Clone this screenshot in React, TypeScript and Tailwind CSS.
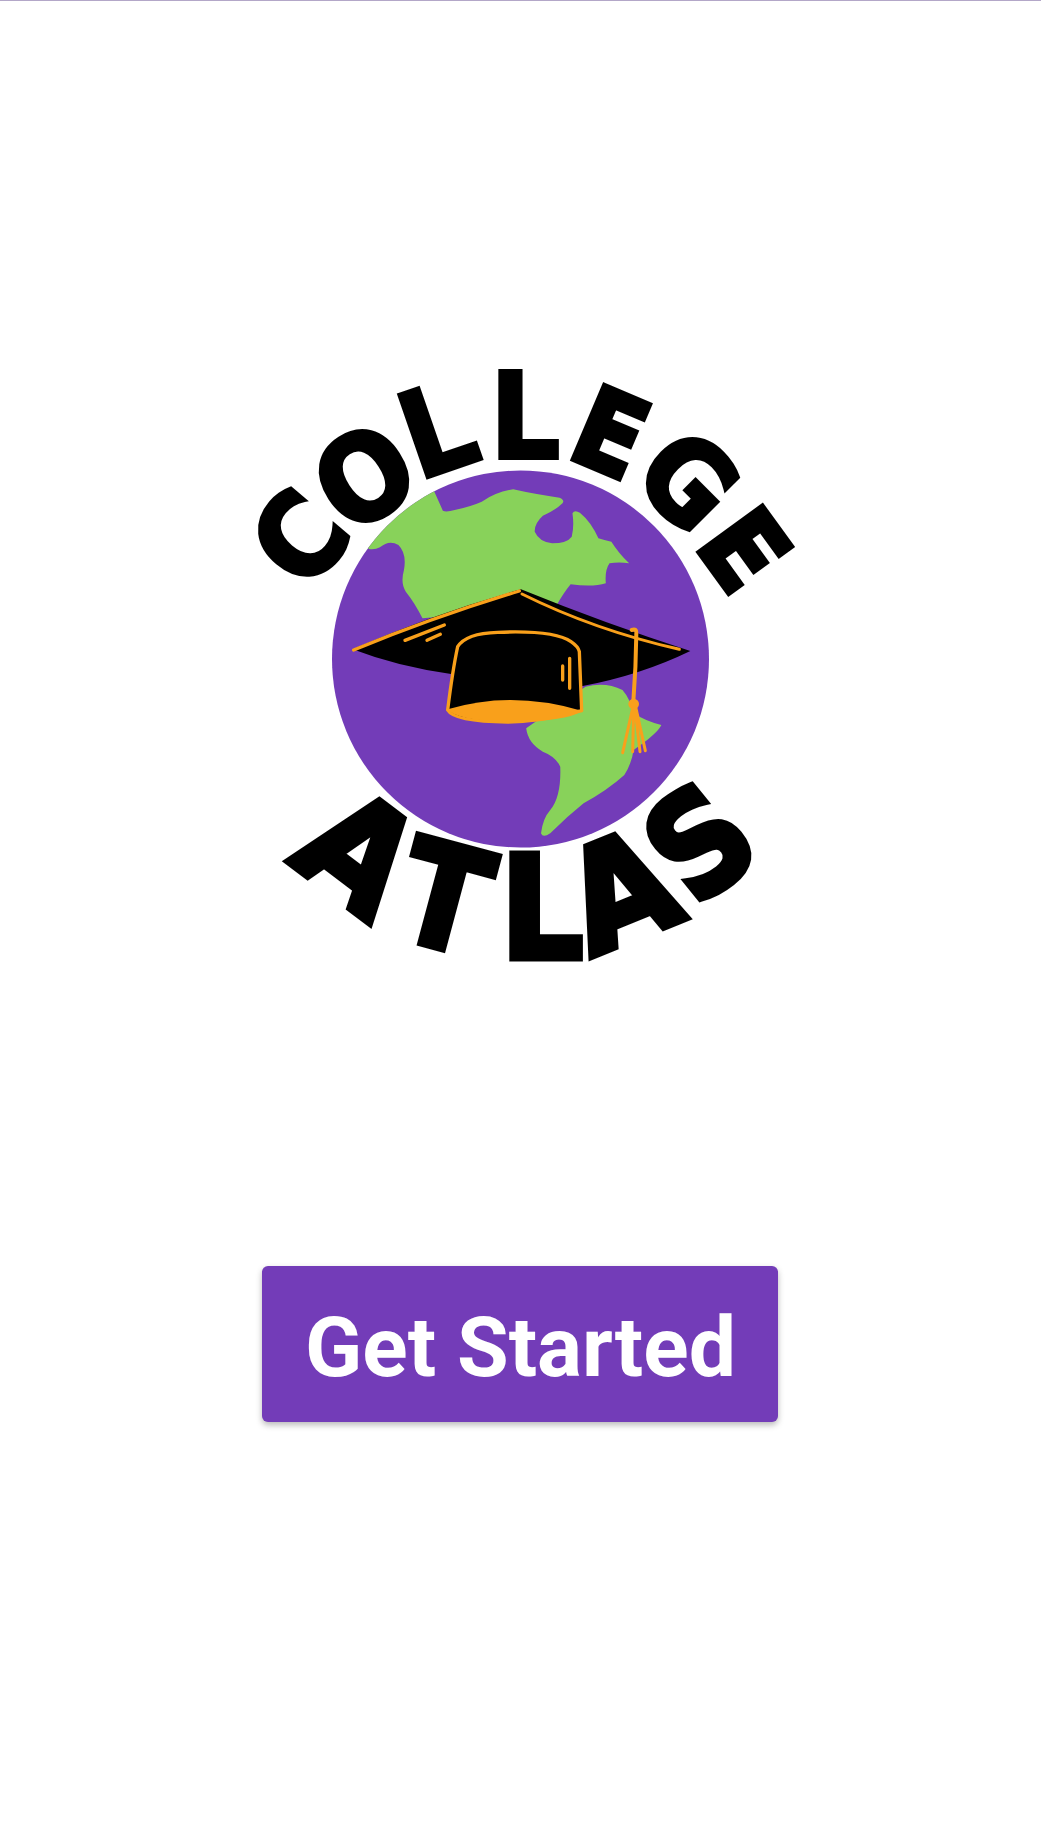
const PURPLE = "#733cb8";
const GREEN = "#88d25a";
const ORANGE = "#f9a01b";

type L = { c: string; x: number; y: number; r: number; sx: number; sy: number; w: number };
const letters: L[] = [
  { c: "C", x: 298, y: 537, r: -50, sx: 0.84, sy: 0.92, w: 5 },
  { c: "O", x: 363, y: 476, r: -33, sx: 0.86, sy: 0.94, w: 5 },
  { c: "L", x: 436, y: 428, r: -19, sx: 0.88, sy: 0.96, w: 4 },
  { c: "L", x: 524, y: 414, r: 0, sx: 0.88, sy: 0.96, w: 4 },
  { c: "E", x: 610, y: 432, r: 23, sx: 0.78, sy: 0.88, w: 6 },
  { c: "G", x: 688, y: 480, r: 45, sx: 0.84, sy: 0.9, w: 5 },
  { c: "E", x: 744, y: 549, r: 54, sx: 0.79, sy: 0.86, w: 6 },
  { c: "A", x: 359, y: 851, r: 37, sx: 1.08, sy: 1.14, w: 6 },
  { c: "T", x: 444, y: 896, r: 15, sx: 1.0, sy: 1.14, w: 6 },
  { c: "L", x: 541, y: 906, r: 0, sx: 1.04, sy: 1.14, w: 6 },
  { c: "A", x: 619, y: 889, r: -22, sx: 1.08, sy: 1.14, w: 6 },
  { c: "S", x: 698, y: 841, r: -39, sx: 1.0, sy: 1.12, w: 6 },
];

function Logo() {
  return (
    <svg width="580" height="640" viewBox="230 350 580 640" className="block">
      <defs>
        <clipPath id="globe">
          <circle cx="519.5" cy="659" r="188.5" />
        </clipPath>
      </defs>
      <circle cx="519.5" cy="659" r="188.5" fill={PURPLE} />
      <g clipPath="url(#globe)">
        <g transform="translate(240 350) scale(0.37037 0.33333)" fill={GREEN}>
          <path d="M520 420 L545 482 Q552 486 565 483 Q620 470 650 455 Q690 425 735 418 Q790 432 860 443 Q875 450 868 460 Q850 480 815 497 Q792 520 793 545 Q805 575 840 580 Q880 580 893 560 Q900 530 895 490 Q900 478 915 488 Q945 515 965 565 Q985 572 1000 575 Q1020 610 1048 640 Q1020 635 995 640 Q982 660 985 700 Q950 712 890 703 Q870 730 850 770 L490 805 Q470 760 445 725 Q430 700 440 660 Q448 610 425 585 Q400 568 375 592 Q362 600 345 597 L300 500 L450 400Z" />
        </g>
        <g transform="translate(240 650) scale(0.37037 0.33333)" fill={GREEN}>
          <path d="M770 235 L930 110 Q985 95 1030 120 Q1050 145 1060 190 Q1095 215 1135 225 Q1125 250 1060 300 Q1055 340 1035 375 Q990 420 925 460 Q880 500 835 550 Q815 565 810 550 Q815 505 835 480 Q865 440 862 350 Q850 320 815 305 Q775 280 770 235Z" />
        </g>
      </g>
      <g transform="translate(340 580) scale(0.33333)">
        <path d="M35 208 Q280 100 540 28 Q790 130 1048 213 Q900 285 725 318 L330 282 Q170 260 35 208Z" fill="#000" />
        <path d="M38 210 Q280 110 535 33" fill="none" stroke={ORANGE} strokeWidth="10" strokeLinecap="round" />
        <path d="M543 42 Q760 150 1015 208" fill="none" stroke={ORANGE} strokeWidth="9" strokeLinecap="round" />
        <path d="M192 181 L310 135 M258 181 L298 163" fill="none" stroke={ORANGE} strokeWidth="10" strokeLinecap="round" />
        <path d="M350 200 Q375 160 470 157 Q640 150 690 185 Q712 200 715 215 L722 392 Q600 425 500 426 Q340 425 320 390 Q335 270 350 200Z" fill="#000" stroke={ORANGE} strokeWidth="10" strokeLinejoin="round" />
        <path d="M320 388 Q510 330 722 392 Q700 415 560 426 Q350 428 320 388Z" fill={ORANGE} />
        <path d="M665 258 L665 300 M686 235 L686 325" fill="none" stroke={ORANGE} strokeWidth="10" strokeLinecap="round" />
        <path d="M872 150 Q888 145 886 160 Q885 260 877 365" fill="none" stroke={ORANGE} strokeWidth="12" strokeLinecap="round" />
        <circle cx="878" cy="372" r="16" fill={ORANGE} />
        <path d="M875 385 L845 518 M878 385 L875 515 M882 385 L897 515 M885 385 L913 512" fill="none" stroke={ORANGE} strokeWidth="9" strokeLinecap="round" />
      </g>
      {letters.map((l, i) => (
        <g key={i} transform={`translate(${l.x} ${l.y}) rotate(${l.r}) scale(${l.sx} ${l.sy})`}>
          <text
            x="0"
            y="45.5"
            textAnchor="middle"
            fontFamily="'DejaVu Sans', sans-serif"
            fontWeight="700"
            fontSize="125"
            fill="#000"
            stroke="#000"
            strokeWidth={l.w}
          >
            {l.c}
          </text>
        </g>
      ))}
    </svg>
  );
}

export default function App() {
  return (
    <div className="flex flex-col items-center w-[1041px] h-[1848px] bg-white overflow-hidden">
      <div className="w-full h-px bg-[#b3a7c8]" />
      <div className="mt-[349px]">
        <Logo />
      </div>
      <button className="mt-[276px] mr-[2px] w-[516px] h-[156px] pt-[7px] pl-[2px] rounded-[6px] bg-[#733cb8] text-white text-[84px] leading-none font-bold shadow-[0_3px_6px_rgba(0,0,0,0.28)] font-['Roboto',sans-serif]">
        Get Started
      </button>
    </div>
  );
}
